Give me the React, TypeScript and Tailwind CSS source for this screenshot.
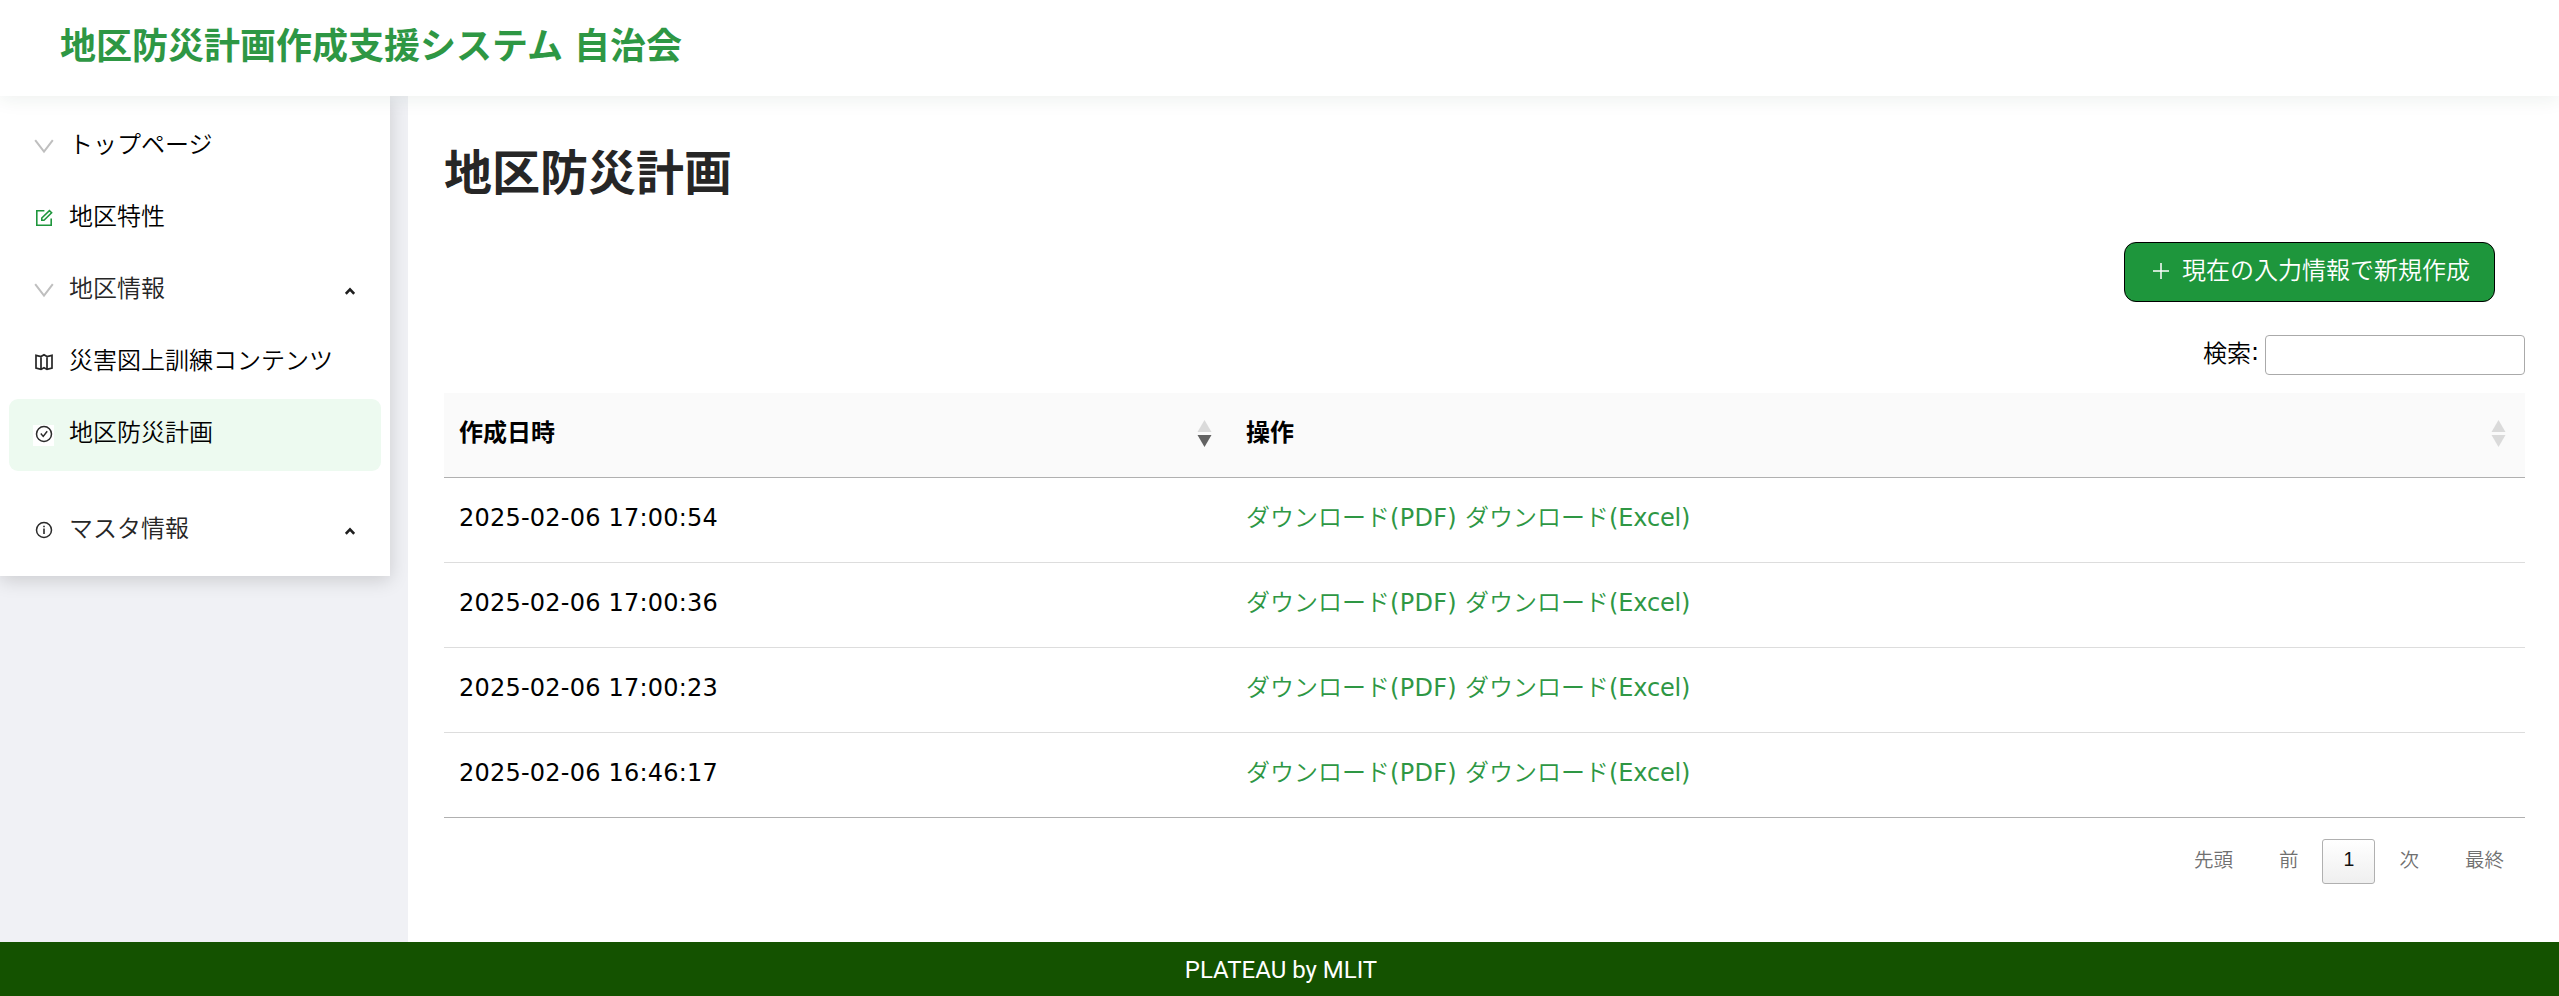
import React from "react";

const ICON = "h-[18px] w-[18px]";

function VIcon() {
  return (
    <svg className="h-[18px] w-[20px] shrink-0" viewBox="0 0 20 18" fill="none" stroke="#bfbfbf" strokeWidth="2">
      <path d="M1.2 3.2 L10 14.6 L18.8 3.2" />
    </svg>
  );
}

function EditIcon() {
  return (
    <svg className={ICON} viewBox="0 0 18 18" fill="none" stroke="#1e963c" strokeWidth="1.6">
      <path d="M9.4 1.8H1.8V16.2H16.2V9.6" />
      <path d="M6.8 9 L14.4 1.6 L16.6 3.8 L9 11.2 H6.8Z" />
    </svg>
  );
}

function MapIcon() {
  return (
    <svg className={ICON} viewBox="0 0 18 18" fill="none" stroke="#262626" strokeWidth="1.7">
      <path d="M1 2.4 L6 3.6 L9 1.8 L12 3.6 L17 2.4 V15.2 L12 16.4 L9 14.8 L6 16.4 L1 15.2Z M6 3.5V16 M12 3.5V16" />
    </svg>
  );
}

function CheckIcon() {
  return (
    <svg className={ICON} viewBox="0 0 18 18" fill="none" stroke="#2b2b2b" strokeWidth="1.5">
      <circle cx="9" cy="9" r="7.5" />
      <path d="M5.8 8.6 L8.2 11.4 L12.2 6.2" />
    </svg>
  );
}

function InfoIcon() {
  return (
    <svg className={ICON} viewBox="0 0 18 18" fill="none" stroke="#2b2b2b" strokeWidth="1.5">
      <circle cx="9" cy="9" r="7.5" />
      <path d="M9 7.6V13 M9 4.8V6.3" strokeWidth="1.6" />
    </svg>
  );
}

type ItemProps = { icon: React.ReactNode; label: string; active?: boolean; group?: boolean };

function MenuItem({ icon, label, active, group }: ItemProps) {
  return (
    <a
      className={`flex h-[72px] items-center rounded-[9px] pr-[26px] pl-6 text-2xl ${active ? "bg-[#edfaf0]" : ""} ${group ? "text-[#262626]" : "text-black"}`}
    >
      <span className={`flex h-[21px] w-[21px] items-start justify-center ${active ? "bg-white" : ""}`}>{icon}</span>
      <span className="-mt-2 ml-[15px] flex-1 leading-9 whitespace-nowrap">{label}</span>
      {group && (
        <svg className="-mt-px h-2 w-[10px]" viewBox="0 0 10 8" fill="none" stroke="#1f1f1f" strokeWidth="2.6">
          <path d="M0.8 6.8 L5 2.4 L9.2 6.8" />
        </svg>
      )}
    </a>
  );
}

function SortIcon({ desc }: { desc?: boolean }) {
  return (
    <svg className="-mt-[3px] h-[27px] w-[15px]" viewBox="0 0 15 27">
      <path d="M7.5 0L14.5 12H0.5Z" fill="#dadada" />
      <path d="M7.5 27L14.5 15H0.5Z" fill={desc ? "#626262" : "#dadada"} />
    </svg>
  );
}

const rows = ["2025-02-06 17:00:54", "2025-02-06 17:00:36", "2025-02-06 17:00:23", "2025-02-06 16:46:17"];

function Download({ kind }: { kind: string }) {
  return (
    <a className="flex">
      <span className="-mt-[2px]">ダウンロード</span>
      <span className={`font-["DejaVu_Sans",sans-serif] font-normal ${kind === "PDF" ? "tracking-[0.3px]" : "tracking-[-0.15px]"}`}>({kind})</span>
    </a>
  );
}

export default function App() {
  return (
    <div className='flex h-[996px] flex-col bg-white font-["Noto_Sans_CJK_JP",sans-serif] font-[350] text-black'>
      <header className="relative z-10 flex h-24 shrink-0 items-center bg-white pl-[60px] shadow-[0_3px_18px_rgba(20,60,40,0.08)]">
        <h1 className="-mt-[11px] text-4xl font-bold whitespace-pre text-[#2e9744] [word-spacing:3px]">地区防災計画作成支援システム 自治会</h1>
      </header>

      <div className="flex flex-1 bg-[#f0f1f5]">
        <aside className="mr-[18px] w-[390px] shrink-0">
          <nav className="h-[480px] bg-white px-[9px] pt-[15px] shadow-[0_4px_18px_rgba(0,0,0,0.16)]">
            <MenuItem icon={<VIcon />} label="トップページ" />
            <MenuItem icon={<EditIcon />} label="地区特性" />
            <MenuItem icon={<VIcon />} label="地区情報" group />
            <MenuItem icon={<MapIcon />} label="災害図上訓練コンテンツ" />
            <MenuItem icon={<CheckIcon />} label="地区防災計画" active />
            <div className="mt-6">
              <MenuItem icon={<InfoIcon />} label="マスタ情報" group />
            </div>
          </nav>
        </aside>

        <main className="flex flex-1 flex-col bg-white pr-[34px] pl-9">
          <h2 className="mt-[37px] text-5xl leading-[72px] font-bold text-[#262626]">地区防災計画</h2>

          <div className="mt-[37px] mr-[30px] flex justify-end">
            <button className="flex h-[60px] w-[371px] items-center rounded-xl border border-black bg-[#1e963c] pl-[27px] text-2xl text-white">
              <svg className="-mt-[2px] h-[18px] w-[18px]" viewBox="0 0 18 18" stroke="#fff" strokeWidth="1.5">
                <path d="M1 9H17M9 1V17" />
              </svg>
              <span className="-mt-[7px] ml-3 leading-9 whitespace-nowrap">現在の入力情報で新規作成</span>
            </button>
          </div>

          <div className="mt-[33px] flex h-10 items-center justify-end text-2xl">
            <label className="-mt-[6px] mr-[6px] flex leading-9">
              検索<span className='font-["DejaVu_Sans",sans-serif] font-normal'>:</span>
            </label>
            <input className="h-10 w-[260px] rounded-[4px] border border-[#aaa] bg-white" />
          </div>

          <section className="mt-[18px] text-2xl">
            <div className="flex h-[85px] items-center border-b border-[#b0b0b0] bg-[#fafafa] font-bold">
              <div className="flex w-[788px] items-center justify-between pr-5 pl-[15px]">
                <span className="-mt-2">作成日時</span>
                <SortIcon desc />
              </div>
              <div className="flex flex-1 items-center justify-between pr-[19px] pl-[14px]">
                <span className="-mt-2">操作</span>
                <SortIcon />
              </div>
            </div>
            {rows.map((date, i) => (
              <div
                key={date}
                className={`flex h-[85px] items-center border-b ${i === rows.length - 1 ? "border-[#b0b0b0]" : "border-[#dddddd]"}`}
              >
                <div className='-mt-1 w-[788px] pl-[15px] font-["DejaVu_Sans",sans-serif] font-normal tracking-[0.22px]'>{date}</div>
                <div className="-mt-[5px] flex gap-[8px] pl-[14px] text-[#2e9744]">
                  <Download kind="PDF" />
                  <Download kind="Excel" />
                </div>
              </div>
            ))}
          </section>

          <div className="mt-[21px] flex h-[45px] items-center justify-end pr-[21px] text-[19.5px] text-[#707070]">
            <span className="-mt-[6px]">先頭</span>
            <span className="-mt-[6px] ml-[46px]">前</span>
            <span className="mr-6 ml-6 flex h-[45px] w-[53px] items-center justify-center rounded-[3px] border border-[#b0b0b0] bg-linear-to-b from-white to-[#efefef] text-[#111]">
              <span className='-mt-[3px] font-["Liberation_Sans",sans-serif]'>1</span>
            </span>
            <span className="-mt-[6px]">次</span>
            <span className="-mt-[6px] ml-[46px]">最終</span>
          </div>
        </main>
      </div>

      <footer className="flex h-[54px] shrink-0 items-center justify-center bg-[#145200] pl-[3px] font-[Roboto,sans-serif] text-2xl font-normal text-white">
        <span className="mt-[2px]">PLATEAU by MLIT</span>
      </footer>
    </div>
  );
}
